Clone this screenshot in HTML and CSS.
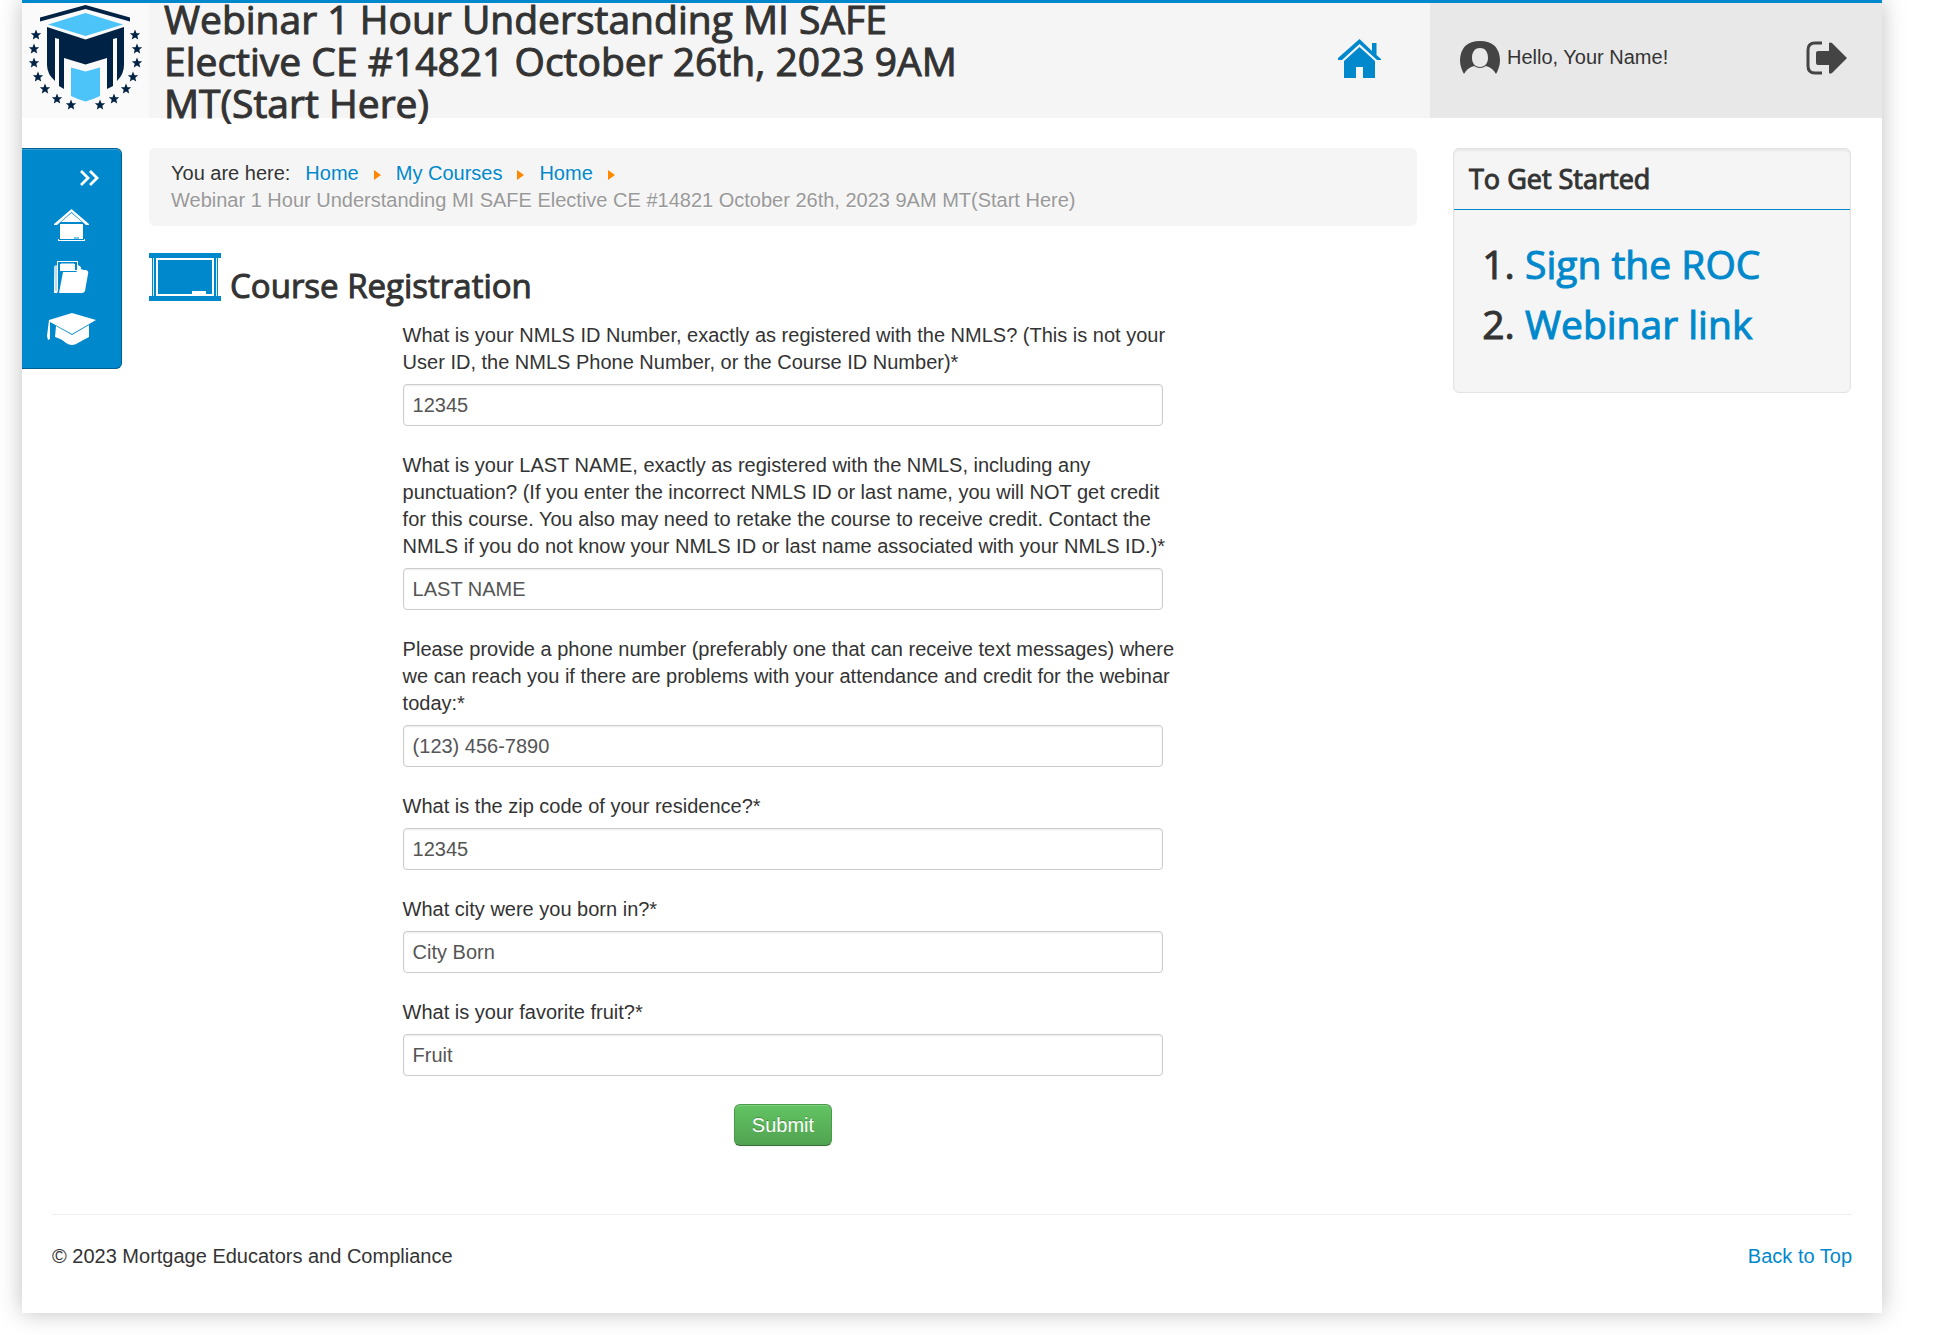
FILE: index.html
```html
<!DOCTYPE html>
<html lang="en">
<head>
  <meta charset="UTF-8" />
  <title>Course Registration</title>
  <meta name="viewport" content="width=device-width, initial-scale=1.0" />
  <link rel="stylesheet" href="styles.css">
</head>

<body>
  <div class="page" id="top">
    <header class="header">
      <a class="logo" href="#" aria-label="Mortgage Educators and Compliance">
        <svg viewBox="0 0 127 115" width="127" height="115">
          <defs>
            <path id="star" d="M0-5.4 1.5-1.8 5.2-1.7 2.3.8 3.2 4.5 0 2.4-3.2 4.5-2.3.8-5.2-1.7-1.5-1.8z" />
          </defs>
          <path d="M18 18.500V14.500L63.500 2 108 14.500V18.500L63.500 6z" fill="#002244" />
          <path d="M26 21.500 63.500 10 101 21.500 63.500 33z" fill="#4cc4fa" />
          <path d="M25 24 63.500 36.500 102 24V62Q102 71 95 78V35L91 36V83L85 86V55L63.500 61.500 42 55V86L37 83V36L33 35V78Q25 71 25 62z" fill="#002244" />
          <path d="M49 64.500 63.500 68.500 78 64.500V93Q72 96 63.500 98.500Q55 96 49 93z" fill="#4cc4fa" />
          <g fill="#002244">
            <use href="#star" x="14" y="32" /><use href="#star" x="12" y="46" /><use href="#star" x="12" y="60" />
            <use href="#star" x="16" y="74" /><use href="#star" x="23" y="86" /><use href="#star" x="35" y="96" /><use href="#star" x="49" y="102" />
            <use href="#star" x="113" y="32" /><use href="#star" x="115" y="46" /><use href="#star" x="115" y="60" />
            <use href="#star" x="111" y="74" /><use href="#star" x="104" y="86" /><use href="#star" x="92" y="96" /><use href="#star" x="78" y="102" />
          </g>
        </svg>
      </a>
      <div class="header-main">
        <h1>Webinar 1 Hour Understanding MI SAFE Elective CE #14821 October 26th, 2023 9AM MT(Start Here)</h1>
        <a class="home-link" href="#" aria-label="Home">
          <svg viewBox="0 0 43 40" width="43" height="40" fill="#08c">
            <path d="M21.500 0 34 12V4H38.500V16L43 20V21H39L21.500 5 4 21H0V19z" />
            <path d="M21.500 8 37 22V39H25V28H18V39H6V22z" />
          </svg>
        </a>
      </div>
      <div class="user">
        <svg viewBox="0 0 40 34" width="40" height="34">
          <path fill="#444" fill-rule="evenodd" d="M4 33Q0 26 0 19Q1 0 20 0Q39 0 40 19Q40 26 36 33Q33 27 26 25Q20 29 14 25Q7 27 4 33zM20 7C14 7 12 12 12 17C12 22 15 26 20 26C25 26 28 22 28 17C28 12 26 7 20 7z" />
        </svg>
        <span>Hello, Your Name!</span>
        <a class="logout" href="#" aria-label="Log out">
          <svg viewBox="0 0 41 34" width="41" height="34">
            <path d="M16 2H9Q2 2 2 9V25Q2 32 9 32H16" fill="none" stroke="#444" stroke-width="3" />
            <path d="M12 10H23V2Q24 1 26 2L41 17 26 32Q24 33 23 32V24H12Q10 24 10 22V12Q10 10 12 10z" fill="#444" />
          </svg>
        </a>
      </div>
    </header>

    <div class="content">
      <nav class="sidebar">
        <a class="toggle" href="#" aria-label="Expand menu">
          <svg viewBox="0 0 19 16" width="19" height="16" fill="none" stroke="#fff" stroke-width="2.800">
            <path d="M1 1 8 8 1 15M10 1 17 8 10 15" />
          </svg>
        </a>
        <a href="#" aria-label="Home">
          <svg viewBox="0 0 35 32" width="35" height="32">
            <path d="M17.500 0 35 15V16H32L17.500 3 3 16H0V15z" fill="#fff" />
            <path d="M17.500 4 28 13H7zM6 15H29V30H31V32H4V30H6z" fill="#fff" />
            <path d="M5 30.500H30M20 29H25" stroke="#08c" />
          </svg>
        </a>
        <a href="#" aria-label="My files">
          <svg viewBox="0 0 35 32" width="35" height="32">
            <path d="M0 6 2 4V30H4L3 32H0zM3 0H24V4L27 6V8L32 10H4V30H3z" fill="#fff" />
            <path d="M0 6 3 4V30H1z" fill="#b9dff2" />
            <path d="M5 30V2H22V9" fill="none" stroke="#08c" stroke-width="2" />
            <path d="M7 3.500H20M7 7.500H20" stroke="#fff" stroke-width="2" />
            <path d="M9 11H22L25 9H32Q35 10 34 13L31 30Q30 32 28 32H5z" fill="#fff" />
          </svg>
        </a>
        <a href="#" aria-label="My courses">
          <svg viewBox="0 0 49 32" width="49" height="32" fill="#fff">
            <path d="M25 0 49 7 25 21 3 9 3 26 1 27 0 23 2 7z" />
            <path d="M9 13 25 22 42 12V24Q36 27 31 30Q25 34 19 30Q15 26 8 24z" />
          </svg>
        </a>
      </nav>

      <main class="main">
        <ul class="breadcrumb">
          <li>You are here:</li>
          <li><a href="#">Home</a><span class="arrow"></span></li>
          <li><a href="#">My Courses</a><span class="arrow"></span></li>
          <li><a href="#">Home</a><span class="arrow"></span></li>
          <li class="active">Webinar 1 Hour Understanding MI SAFE Elective CE #14821 October 26th, 2023 9AM MT(Start Here)</li>
        </ul>

        <div class="heading">
          <svg viewBox="0 0 72 48" width="72" height="48">
            <path d="M0 0H72V5H69V43H72V48H0V43H3V5H0z" fill="#08c" />
            <path d="M4.500 5V43M67.500 5V43" stroke="#d8eef9" />
            <path d="M8 6H64V42H8z" fill="none" stroke="#fff" stroke-width="2" />
            <path d="M43 38H57V42H43z" fill="#fff" />
          </svg>
          <h2>Course Registration</h2>
        </div>

        <form class="registration" action="#">
          <label for="nmls-id">What is your NMLS ID Number, exactly as registered with the NMLS? (This is not your User ID, the NMLS Phone Number, or the Course ID Number)*</label>
          <input id="nmls-id" type="text" value="12345" />
          <label for="last-name">What is your LAST NAME, exactly as registered with the NMLS, including any punctuation? (If you enter the incorrect NMLS ID or last name, you will NOT get credit for this course. You also may need to retake the course to receive credit. Contact the NMLS if you do not know your NMLS ID or last name associated with your NMLS ID.)*</label>
          <input id="last-name" type="text" value="LAST NAME" />
          <label for="phone">Please provide a phone number (preferably one that can receive text messages) where we can reach you if there are problems with your attendance and credit for the webinar today:*</label>
          <input id="phone" type="text" value="(123) 456-7890" />
          <label for="zip">What is the zip code of your residence?*</label>
          <input id="zip" type="text" value="12345" />
          <label for="city">What city were you born in?*</label>
          <input id="city" type="text" value="City Born" />
          <label for="fruit">What is your favorite fruit?*</label>
          <input id="fruit" type="text" value="Fruit" />
          <button type="submit">Submit</button>
        </form>
      </main>

      <aside class="well">
        <h3>To Get Started</h3>
        <ol>
          <li><a href="#">Sign the ROC</a></li>
          <li><a href="#">Webinar link</a></li>
        </ol>
      </aside>
    </div>

    <footer class="footer">
      <span>© 2023 Mortgage Educators and Compliance</span>
      <a href="#top">Back to Top</a>
    </footer>
  </div>
</body>

</html>
```
FILE: styles.css
```css
* {
  box-sizing: border-box;
}

body {
  margin: 0;
  padding: 0 72px 22px 22px;
  background: #fff;
  font-family: "Liberation Sans", Arial, sans-serif;
  font-size: 20px;
  line-height: 27px;
  color: #333;
}

a {
  color: #08c;
  text-decoration: none;
}

svg {
  display: block;
}

h1,
h2,
h3,
.well ol {
  margin: 0;
  font-family: "Open Sans", sans-serif;
  font-weight: 400;
  -webkit-text-stroke: 1px;
}

.page {
  border-top: 3px solid #08c;
  background: #fff;
  box-shadow: 0 0 22px rgba(0, 0, 0, 0.25);
}

.header {
  display: flex;
  height: 115px;
}

.logo {
  flex: none;
  width: 127px;
  background: #fafafa;
}

.header-main {
  flex: 1;
  display: flex;
  justify-content: space-between;
  padding: 0 49px 0 15px;
  background: #f5f5f5;
}

h1 {
  max-width: 840px;
  margin-top: -5px;
  font-size: 39px;
  line-height: 42px;
}

.home-link {
  padding-top: 36px;
}

.user {
  flex: 0 0 452px;
  display: flex;
  align-items: center;
  gap: 7px;
  padding: 0 35px 6px 30px;
  background: #e8e8e8;
}

.logout {
  margin-left: auto;
}

.content {
  display: flex;
  align-items: flex-start;
  padding: 30px 31px 0 0;
}

.sidebar {
  flex: none;
  display: flex;
  flex-direction: column;
  align-items: center;
  gap: 20px;
  width: 100px;
  margin-right: 27px;
  padding: 21px 0 23px;
  background: #08c;
  border: 1px solid #005f8f;
  border-left: 0;
  border-radius: 0 6px 6px 0;
  box-shadow: inset 0 1px 0 rgba(255, 255, 255, 0.2);
}

.toggle {
  align-self: flex-end;
  margin: 0 22px 3px 0;
}

.main {
  flex: 1;
}

.breadcrumb {
  display: flex;
  flex-wrap: wrap;
  margin: 0 0 27px;
  padding: 12px 22px;
  list-style: none;
  background: #f5f5f5;
  border-radius: 6px;
  text-shadow: 0 1px 0 #fff;
}

.breadcrumb li:first-child {
  margin-right: 15px;
}

.arrow {
  display: inline-block;
  margin: 0 15px;
  border-left: 7px solid #f80;
  border-top: 5px solid transparent;
  border-bottom: 5px solid transparent;
}

.breadcrumb .active {
  color: #999;
}

.heading {
  display: flex;
  gap: 9px;
}

h2 {
  padding-top: 11px;
  font-size: 33px;
  line-height: 44px;
}

.registration {
  width: 60%;
  margin: 14px auto 0;
}

/* questions may run slightly past the text boxes */
.registration label {
  display: block;
  margin: 0 -14px 8px 0;
}

.registration input {
  display: block;
  width: 100%;
  height: 42px;
  margin-bottom: 26px;
  padding: 6px 9px;
  font: inherit;
  color: #555;
  background: #fff;
  border: 1px solid #ccc;
  border-radius: 4px;
  box-shadow: inset 0 1px 2px rgba(0, 0, 0, 0.08);
}

.registration button {
  display: block;
  height: 42px;
  margin: 28px auto 0;
  padding: 0 17px;
  font: inherit;
  color: #fff;
  text-shadow: 0 -1px 0 rgba(0, 0, 0, 0.25);
  background: linear-gradient(#62c462, #51a351);
  border: 1px solid #4a9a4a;
  border-bottom-color: #387038;
  border-radius: 6px;
  box-shadow: inset 0 1px 0 rgba(255, 255, 255, 0.2), 0 1px 2px rgba(0, 0, 0, 0.05);
  cursor: pointer;
}

.well {
  flex: 0 0 398px;
  margin-left: 36px;
  padding-bottom: 38px;
  background: #f5f5f5;
  border: 1px solid #e3e3e3;
  border-radius: 6px;
  box-shadow: inset 0 2px 2px rgba(0, 0, 0, 0.05);
}

h3 {
  padding: 12px 15px;
  font-size: 27px;
  line-height: 36px;
  border-bottom: 1px solid #08c;
}

.well ol {
  margin-top: 24px;
  padding-left: 71px;
  font-size: 39px;
  line-height: 60px;
}

.footer {
  display: flex;
  justify-content: space-between;
  margin: 68px 30px 0;
  padding: 28px 0 43px;
  border-top: 1px solid #eee;
}
```
